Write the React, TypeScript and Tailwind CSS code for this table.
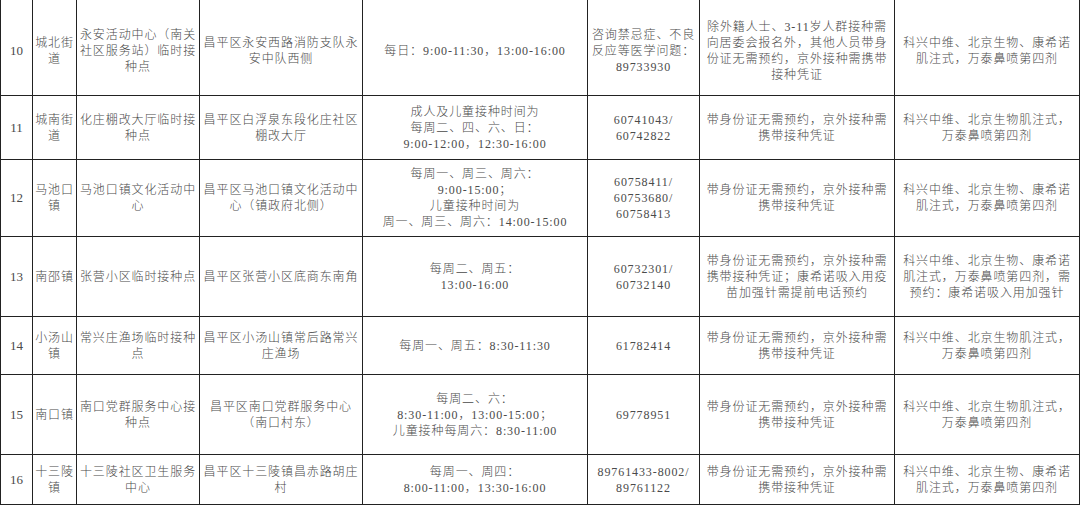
import React from "react";

type Row = {
  no: string;
  h: string;
  pad: string;
  cells: string[][];
};

const rows: Row[] = [
  {
    no: "10",
    h: "h-[96px]",
    pad: "pt-[6px]",
    cells: [
      ["城北街", "道"],
      ["永安活动中心（南关", "社区服务站）临时接", "种点"],
      ["昌平区永安西路消防支队永", "安中队西侧"],
      ["每日：9:00-11:30，13:00-16:00"],
      ["咨询禁忌症、不良", "反应等医学问题：", "89733930"],
      [
        "除外籍人士、3-11岁人群接种需",
        "向居委会报名外，其他人员带身",
        "份证无需预约，京外接种需携带",
        "接种凭证",
      ],
      ["科兴中维、北京生物、康希诺", "肌注式，万泰鼻喷第四剂"],
    ],
  },
  {
    no: "11",
    h: "h-[64px]",
    pad: "",
    cells: [
      ["城南街", "道"],
      ["化庄棚改大厅临时接", "种点"],
      ["昌平区白浮泉东段化庄社区", "棚改大厅"],
      ["成人及儿童接种时间为", "每周二、四、六、日：", "9:00-12:00，12:30-16:00"],
      ["60741043/", "60742822"],
      ["带身份证无需预约，京外接种需", "携带接种凭证"],
      ["科兴中维、北京生物肌注式，", "万泰鼻喷第四剂"],
    ],
  },
  {
    no: "12",
    h: "h-[77px]",
    pad: "",
    cells: [
      ["马池口", "镇"],
      ["马池口镇文化活动中", "心"],
      ["昌平区马池口镇文化活动中", "心（镇政府北侧）"],
      ["每周一、周三、周六：", "9:00-15:00；", "儿童接种时间为", "周一、周三、周六：14:00-15:00"],
      ["60758411/", "60753680/", "60758413"],
      ["带身份证无需预约，京外接种需", "携带接种凭证"],
      ["科兴中维、北京生物、康希诺", "肌注式，万泰鼻喷第四剂"],
    ],
  },
  {
    no: "13",
    h: "h-[80px]",
    pad: "",
    cells: [
      ["南邵镇"],
      ["张营小区临时接种点"],
      ["昌平区张营小区底商东南角"],
      ["每周二、周五：", "13:00-16:00"],
      ["60732301/", "60732140"],
      ["带身份证无需预约，京外接种需", "携带接种凭证；康希诺吸入用疫", "苗加强针需提前电话预约"],
      ["科兴中维、北京生物、康希诺", "肌注式，万泰鼻喷第四剂，需", "预约：康希诺吸入用加强针"],
    ],
  },
  {
    no: "14",
    h: "h-[58px]",
    pad: "",
    cells: [
      ["小汤山", "镇"],
      ["常兴庄渔场临时接种", "点"],
      ["昌平区小汤山镇常后路常兴", "庄渔场"],
      ["每周一、周五：8:30-11:30"],
      ["61782414"],
      ["带身份证无需预约，京外接种需", "携带接种凭证"],
      ["科兴中维、北京生物肌注式，", "万泰鼻喷第四剂"],
    ],
  },
  {
    no: "15",
    h: "h-[80px]",
    pad: "",
    cells: [
      ["南口镇"],
      ["南口党群服务中心接", "种点"],
      ["昌平区南口党群服务中心", "（南口村东）"],
      ["每周二、六：", "8:30-11:00，13:00-15:00；", "儿童接种每周六：8:30-11:00"],
      ["69778951"],
      ["带身份证无需预约，京外接种需", "携带接种凭证"],
      ["科兴中维、北京生物肌注式，", "万泰鼻喷第四剂"],
    ],
  },
  {
    no: "16",
    h: "h-[50px]",
    pad: "",
    cells: [
      ["十三陵", "镇"],
      ["十三陵社区卫生服务", "中心"],
      ["昌平区十三陵镇昌赤路胡庄", "村"],
      ["每周一、周四：", "8:00-11:00，13:30-16:00"],
      ["89761433-8002/", "89761122"],
      ["带身份证无需预约，京外接种需", "携带接种凭证"],
      ["科兴中维、北京生物、康希诺", "肌注式，万泰鼻喷第四剂"],
    ],
  },
];

const colWidths = ["w-[33px]", "w-[44px]", "w-[123px]", "w-[163px]", "w-[225px]", "w-[112px]", "w-[195px]", "w-[185px]"];

export default function App() {
  return (
    <div className="w-[1080px] h-[506px] bg-white overflow-hidden font-['Liberation_Serif','Noto_Sans_CJK_SC',serif] font-light text-[#4a4a4a]">
      <table className="w-[1080px] table-fixed border-separate border-spacing-0">
        <colgroup>
          {colWidths.map((w, i) => (
            <col key={i} className={w} />
          ))}
        </colgroup>
        <tbody>
          {rows.map((row) => (
            <tr key={row.no} className={row.h}>
              {/* row number */}
              <td className={`border-l border-r border-b border-[#222] text-center align-middle text-[13px] ${row.pad}`}>
                {row.no}
              </td>
              {row.cells.map((lines, i) => (
                <td
                  key={i}
                  className={`border-r border-b border-[#222] text-center align-middle px-[1px] text-[12px] leading-[16px] tracking-[0.9px] whitespace-nowrap overflow-hidden ${row.pad}`}
                >
                  {lines.map((line, j) => (
                    <div key={j}>{line}</div>
                  ))}
                </td>
              ))}
            </tr>
          ))}
        </tbody>
      </table>
    </div>
  );
}
